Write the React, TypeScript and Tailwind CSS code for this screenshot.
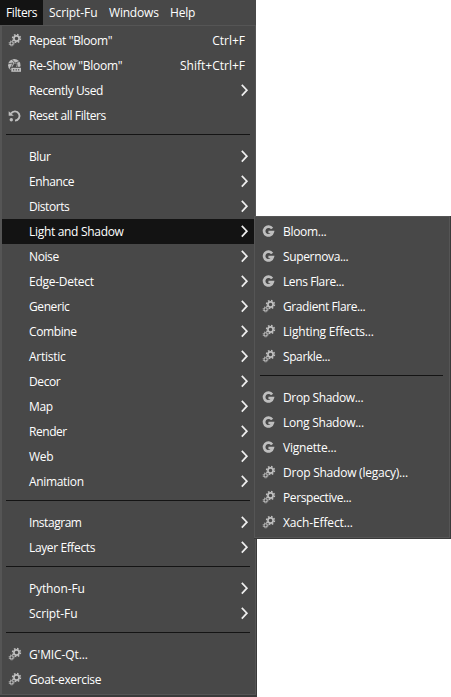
import React from "react";

type Icon = "gears" | "reshow" | "reset" | "g";
type Item = { label: string; track: number; icon?: Icon; key?: string; sub?: boolean; active?: boolean };
type Entry = Item | null;

function Gears() {
  return (
    <svg width="16" height="17" viewBox="0 0 16 17" fill="none" stroke="#bebebe">
      <circle cx="9.5" cy="6.5" r="2.6" strokeWidth="1.7" />
      <circle cx="9.5" cy="6.5" r="3.9" strokeWidth="1.6" strokeDasharray="1.6 1.463" />
      <circle cx="4.6" cy="11.4" r="1.6" strokeWidth="1.1" />
      <circle cx="4.6" cy="11.4" r="2.5" strokeWidth="1" strokeDasharray="1.05 0.913" />
    </svg>
  );
}

function Reshow() {
  return (
    <svg width="16" height="17" viewBox="0 0 16 17">
      <circle cx="7.3" cy="8.2" r="6.2" fill="#bebebe" />
      <path d="M4.5 2l3.8 4.2M12.8 4.2L8 6.2M10.6 11L9.6 5.8M1 6.8l5-.8M6 5.8l-3 6.4" stroke="#484848" strokeWidth="0.8" fill="none" />
      <path d="M7.2 6.2l2.6 1.2-.8 2.6H5.4z" fill="#484848" />
      <path d="M3.5 9.8H16V17H3.5z" fill="#484848" />
      <path d="M4.3 10.8H14v4H4.3z" fill="#bebebe" />
      <path d="M6.7 12v1.6M9.2 12v1.6M11.7 12v1.6" stroke="#484848" strokeWidth="0.9" />
    </svg>
  );
}

function Reset() {
  return (
    <svg width="16" height="17" viewBox="0 0 16 17" fill="none" stroke="#bebebe">
      <path d="M4 6.6A4.6 4.6 0 1 1 8 13.6" strokeWidth="1.9" />
      <path d="M1.7 4.2V8.7H6.8Z" fill="#bebebe" stroke="none" />
      <circle cx="4.3" cy="12.8" r="1.7" fill="#bebebe" stroke="none" />
    </svg>
  );
}

function G() {
  return (
    <svg width="16" height="17" viewBox="0 0 16 17" fill="none" stroke="#bebebe" strokeWidth="2.7">
      <path d="M11.1 5.5A4.4 4.4 0 1 0 11.8 9H7.4" />
    </svg>
  );
}

const icons = { gears: Gears, reshow: Reshow, reset: Reset, g: G };

const item = (label: string, track: number, icon?: Icon, key?: string): Item => ({ label, track, icon, key });
const sub = (label: string, track: number, active = false): Item => ({ label, track, sub: true, active });

const filters: Entry[] = [
  item('Repeat "Bloom"', -0.36, "gears", "Ctrl+F"),
  item('Re-Show "Bloom"', -0.28, "reshow", "Shift+Ctrl+F"),
  sub("Recently Used", -0.38),
  item("Reset all Filters", -0.4, "reset"),
  null,
  sub("Blur", -0.4),
  sub("Enhance", -0.4),
  sub("Distorts", -0.45),
  sub("Light and Shadow", -0.31, true),
  sub("Noise", -0.4),
  sub("Edge-Detect", -0.27),
  sub("Generic", -0.4),
  sub("Combine", -0.4),
  sub("Artistic", -0.25),
  sub("Decor", -0.4),
  sub("Map", -0.3),
  sub("Render", -0.45),
  sub("Web", -0.3),
  sub("Animation", -0.33),
  null,
  sub("Instagram", -0.45),
  sub("Layer Effects", -0.38),
  null,
  sub("Python-Fu", -0.13),
  sub("Script-Fu", -0.1),
  null,
  item("G'MIC-Qt...", -0.1, "gears"),
  item("Goat-exercise", -0.35, "gears"),
];

const shadows: Entry[] = [
  item("Bloom...", -0.3, "g"),
  item("Supernova...", -0.35, "g"),
  item("Lens Flare...", -0.4, "g"),
  item("Gradient Flare...", -0.4, "gears"),
  item("Lighting Effects...", -0.18, "gears"),
  item("Sparkle...", -0.4, "gears"),
  null,
  item("Drop Shadow...", -0.36, "g"),
  item("Long Shadow...", -0.25, "g"),
  item("Vignette...", -0.2, "g"),
  item("Drop Shadow (legacy)...", -0.23, "gears"),
  item("Perspective...", -0.4, "gears"),
  item("Xach-Effect...", -0.12, "gears"),
];

function Rows({ entries }: { entries: Entry[] }) {
  return (
    <>
      {entries.map((e, i) => {
        if (!e) return <div key={i} className="mr-[5px] ml-1 h-4 pt-1.5"><div className="h-px bg-[#141414]" /></div>;
        const I = e.icon && icons[e.icon];
        return (
          <div key={i} className={`flex h-[25px] items-center pl-[5px] ${e.active ? "bg-[#131313]" : ""}`}>
            <span className="w-[22px] shrink-0">{I && <I />}</span>
            <span className="grow" style={{ letterSpacing: e.track }}>{e.label}</span>
            {e.key && <span className="pr-[10px]">{e.key}</span>}
            {e.sub && (
              <svg width="8" height="13" viewBox="0 0 8 13" className="mr-[6px]" fill="none" stroke="#eeeeee" strokeWidth="1.7">
                <path d="M0.8 0.8L5.9 6.2L0.8 11.6" />
              </svg>
            )}
          </div>
        );
      })}
    </>
  );
}

export default function App() {
  return (
    <div className="relative h-[697px] w-[451px] overflow-hidden bg-white font-['Open_Sans','Noto_Sans',sans-serif] text-[12px] whitespace-nowrap text-white">
      <div className="flex h-[697px] w-[256px] flex-col bg-[#484848]">
        <nav className="flex h-[25px] shrink-0 items-center">
          <span className="flex h-full w-[43px] items-center bg-[#131313] pl-1.5 tracking-[-0.4px]">Filters</span>
          <span className="w-[60px] pl-1.5 tracking-[-0.1px]">Script-Fu</span>
          <span className="w-[61px] pl-1.5 tracking-[-0.2px]">Windows</span>
          <span className="pl-1.5 tracking-[-0.2px]">Help</span>
        </nav>
        <div className="h-[670px] border border-l-2 border-[#555555] pt-[2px]">
          <Rows entries={filters} />
        </div>
        <div className="h-[2px] bg-[#3a3a3a]" />
      </div>
      <div className="absolute top-[216px] left-[256px] h-[481px] w-px bg-[#3a3a3a]" />
      <div className="absolute top-[216px] left-[254px] h-[323px] w-[197px] border-r border-b border-[#3a3a3a]">
        <div className="h-full border border-[#555555] bg-[#484848] pt-[2px] pr-px pl-px">
          <Rows entries={shadows} />
        </div>
      </div>
    </div>
  );
}
